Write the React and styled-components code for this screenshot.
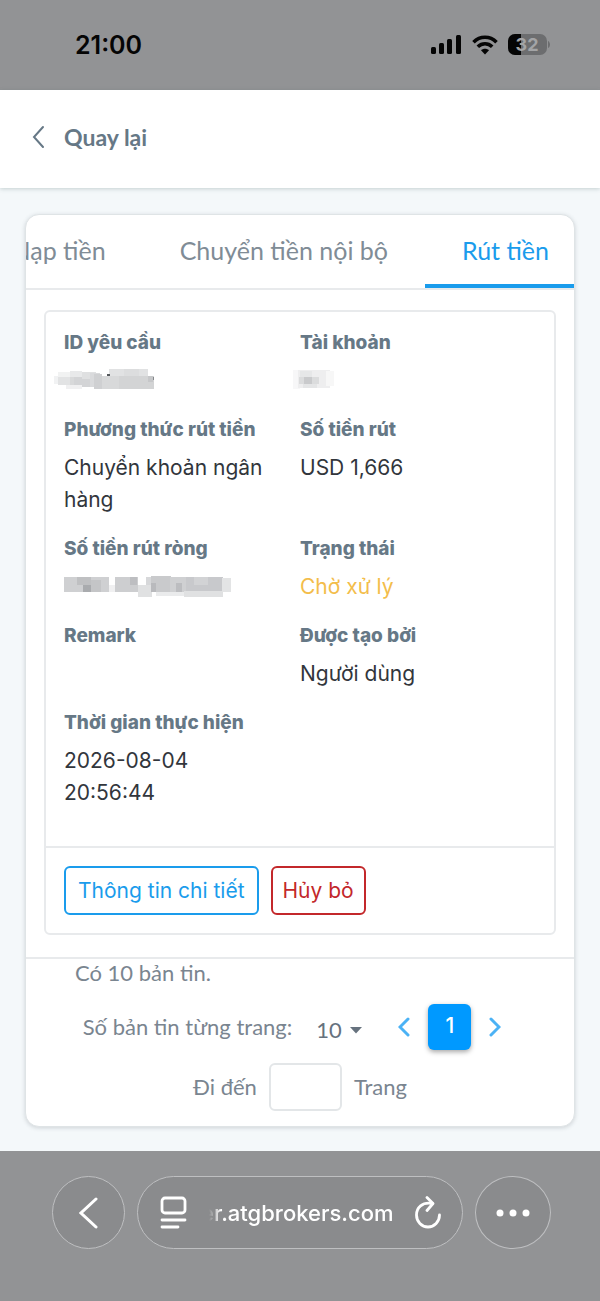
import { useState } from 'react';
import styled, { createGlobalStyle } from 'styled-components';

const GlobalStyle = createGlobalStyle`
  *, *::before, *::after {
    box-sizing: border-box;
  }

  body {
    margin: 0;
    background: #f4f8fa;
    color: #32363c;
    font-family: Inter, "Noto Sans", sans-serif;
    font-size: 21px;
    line-height: 32px;
  }

  button, input, select {
    font: inherit;
    color: inherit;
  }
`;

const round = "Lato, 'Noto Sans', sans-serif";

// ---- status bar ----
const StatusBar = styled.header`
  display: flex;
  align-items: center;
  justify-content: space-between;
  height: 90px;
  padding: 0 50px 0 75px;
  background: #929395;
  color: #050505;
`;

const Clock = styled.time`
  font-size: 25px;
  font-weight: 600;
`;

const StatusIcons = styled.div`
  display: flex;
  align-items: center;
  gap: 10px;

  svg {
    display: block;
  }
`;

// ---- back bar ----
const BackBar = styled.nav`
  display: flex;
  align-items: center;
  height: 98px;
  padding: 0 32px 4px;
  background: #fff;
  box-shadow: 0 1px 4px rgba(60, 90, 90, 0.25);
`;

const BackButton = styled.button`
  display: flex;
  align-items: center;
  gap: 19px;
  padding: 0;
  border: none;
  background: none;
  color: #667886;
  font-family: ${round};
  font-size: 23px;
  font-weight: 700;
  cursor: pointer;
`;

// ---- card ----
const Main = styled.main`
  padding: 26px 25px 24px;
`;

const Card = styled.section`
  overflow: hidden;
  border: 1px solid #dfe4e6;
  border-radius: 14px;
  background: #fff;
  box-shadow: 0 1px 4px rgba(60, 70, 80, 0.2);
`;

const Tabs = styled.div`
  display: flex;
  justify-content: flex-end;
  height: 75px;
  overflow: hidden;
  border-bottom: 2px solid #e8eaec;
`;

const Tab = styled.button`
  flex: none;
  height: 73px;
  padding: 0 37px;
  border: none;
  border-bottom: 4px solid ${({ $active }) => ($active ? '#1a9cec' : 'transparent')};
  background: none;
  color: ${({ $active }) => ($active ? '#1a9cec' : '#808c96')};
  font-family: ${round};
  font-size: 25px;
  cursor: pointer;

  &:last-child {
    margin-right: -12px;
  }
`;

const Panel = styled.article`
  margin: 20px 18px 22px;
  border: 2px solid #e8eaec;
  border-radius: 6px;
`;

const Fields = styled.dl`
  display: grid;
  grid-template-columns: 1fr 1fr;
  row-gap: 17px;
  margin: 0;
  padding: 15px 18px 37px;
`;

const Field = styled.div`
  min-height: 70px;
  padding-right: 32px;
`;

const Label = styled.dt`
  margin-bottom: 6px;
  color: #667886;
  font-size: 19px;
  font-weight: 800;
  white-space: nowrap;
`;

const Value = styled.dd`
  margin: 0;
  color: ${({ $pending }) => ($pending ? '#f3bd4b' : 'inherit')};

  svg {
    display: block;
    overflow: visible;
  }
`;

const PanelFooter = styled.footer`
  display: flex;
  gap: 12px;
  padding: 18px;
  border-top: 2px solid #e8eaec;
`;

const OutlineButton = styled.button`
  height: 49px;
  padding: ${({ $danger }) => ($danger ? '1px 10px 0' : '1px 12px 0')};
  border: 2px solid currentColor;
  border-radius: 6px;
  background: #fff;
  color: ${({ $danger }) => ($danger ? '#c3282b' : '#1a9cec')};
  white-space: nowrap;
  cursor: pointer;
`;

// ---- pager ----
const Pager = styled.footer`
  border-top: 2px solid #e8eaec;
  padding-bottom: 9px;
  color: #7a8590;
  font-family: ${round};
  font-size: 22px;
`;

const Total = styled.p`
  margin: 0 0 10px;
  padding: 0 49px;
  line-height: 28px;
`;

const PagerRow = styled.div`
  display: flex;
  align-items: center;
  justify-content: center;
  gap: 12px;
  height: 60px;
`;

const SizeRow = styled(PagerRow)`
  gap: 24px;
  padding-right: 16px;
  white-space: nowrap;
`;

const SizePicker = styled.span`
  display: flex;
  align-items: center;
  gap: 8px;
  padding-top: 6px;
  color: #66727e;
`;

const SizeSelect = styled.select`
  appearance: none;
  padding: 0;
  border: none;
  background: none;
`;

const Pages = styled.div`
  display: flex;
  align-items: center;
  gap: 18px;
  margin-left: 12px;
`;

const ArrowButton = styled.button`
  display: flex;
  padding: 0;
  border: none;
  background: none;
  color: #4bb2f5;
  cursor: pointer;
`;

const PageButton = styled.button`
  width: 43px;
  height: 46px;
  padding: 0 0 2px;
  border: none;
  border-radius: 6px;
  background: #0099ff;
  box-shadow: 0 2px 5px rgba(0, 0, 0, 0.35);
  color: #fff;
  font-family: Inter, sans-serif;
  font-size: 21px;
  font-weight: 500;
  cursor: pointer;
`;

const PageInput = styled.input`
  width: 73px;
  height: 48px;
  margin: 0;
  padding: 0 8px;
  border: 2px solid #e3e6e8;
  border-radius: 6px;
  background: #fff;
`;

// ---- browser toolbar ----
const Toolbar = styled.footer`
  display: flex;
  align-items: flex-start;
  gap: 12px;
  height: 150px;
  padding: 25px 49px 0 52px;
  background: #929395;
`;

const RoundButton = styled.button`
  display: flex;
  flex: none;
  align-items: center;
  justify-content: center;
  width: ${({ $wide }) => ($wide ? 76 : 73)}px;
  height: 73px;
  padding: 0;
  border: 1px solid #bebfc1;
  border-radius: 50%;
  background: #8a8b8d;
  color: #fff;
`;

const AddressBar = styled.div`
  display: flex;
  flex: 1;
  align-items: center;
  justify-content: space-between;
  min-width: 0;
  height: 73px;
  padding: 0 20px;
  border: 1px solid #bebfc1;
  border-radius: 37px;
  background: #8a8b8d;
  color: #fff;
`;

const Address = styled.span`
  display: flex;
  justify-content: flex-end;
  width: 185px;
  overflow: hidden;
  font-size: 22px;
  font-weight: 500;
  white-space: nowrap;
  mask-image: linear-gradient(to right, transparent, #000 12px);
`;

const IconButton = styled.button`
  display: flex;
  padding: 0;
  border: none;
  background: none;
`;

const SignalIcon = () => (
  <svg width="31" height="20" viewBox="0 0 31 20" fill="currentColor">
    <rect x="0" y="12" width="5" height="7" rx="1.5" />
    <rect x="8" y="8" width="5" height="11" rx="1.5" />
    <rect x="16" y="4" width="5" height="15" rx="1.5" />
    <rect x="25" y="0" width="5" height="19" rx="1.5" />
  </svg>
);

const WifiIcon = () => (
  <svg width="26" height="20" viewBox="0 0 26 20" fill="none" stroke="currentColor" strokeWidth="3.6">
    <path d="M1.5 7.2C8 .6 18 .6 24.5 7.2" />
    <path d="M5.8 11.8c4.2-4 10.2-4 14.4 0" />
    <path d="M13 19.4l-4-4.1c2.3-2 5.7-2 8 0z" fill="currentColor" stroke="none" />
  </svg>
);

const BatteryIcon = () => (
  <svg width="42" height="22" viewBox="0 0 42 22">
    <defs>
      <clipPath id="battery">
        <rect width="39" height="21" rx="7" />
      </clipPath>
    </defs>
    <g clipPath="url(#battery)">
      <rect width="39" height="21" fill="#6c6d6f" />
      <rect width="13" height="21" fill="#050505" />
    </g>
    <path d="M40 7c2.6 1 2.6 6 0 7z" fill="#6c6d6f" />
    <text x="19" y="17" textAnchor="middle" fontFamily="Inter, sans-serif" fontSize="18" fontWeight="700" fill="#a3a4a6">
      32
    </text>
  </svg>
);

const Chevron = ({ width, height, stroke, flip }) => (
  <svg width={width} height={height} viewBox={`0 0 ${width} ${height}`} fill="none" stroke="currentColor" strokeWidth={stroke} strokeLinecap="round">
    <path
      d={
        flip
          ? `M2 2L${width - 2} ${height / 2}L2 ${height - 2}`
          : `M${width - 2} 2L2 ${height / 2}L${width - 2} ${height - 2}`
      }
    />
  </svg>
);

const CaretIcon = () => (
  <svg width="12" height="7" viewBox="0 0 12 7" fill="currentColor">
    <path d="M0 0h12L6 6.5z" />
  </svg>
);

const ReaderIcon = () => (
  <svg width="30" height="34" viewBox="0 0 30 34" fill="none" stroke="currentColor" strokeWidth="2.8" strokeLinecap="round">
    <rect x="4" y="2" width="23" height="15" rx="3" />
    <path d="M4 24h23M4 31h16" />
  </svg>
);

const ReloadIcon = () => (
  <svg width="28" height="34" viewBox="0 0 28 34" fill="none" stroke="currentColor" strokeWidth="2.8" strokeLinecap="round" strokeLinejoin="round">
    <path d="M18.5 7.5C8 5.5 2.5 12 2.5 19a11.5 12 0 0 0 23 0" />
    <path d="M13 1.5l6 6-6 7" />
  </svg>
);

const DotsIcon = () => (
  <svg width="34" height="8" viewBox="0 0 34 8" fill="currentColor">
    <circle cx="4" cy="4" r="3.5" />
    <circle cx="17" cy="4" r="3.5" />
    <circle cx="30" cy="4" r="3.5" />
  </svg>
);

// [x, y, width, height, colour] of each block that covers a hidden value
const masks = {
  id: [
    [-10, 10, 12, 8, '#f1f2f3'], [-6, 6, 14, 5, '#f1f2f2'], [-6, 11, 14, 8, '#e2e3e4'],
    [6, 5, 12, 7, '#e8e9ea'], [6, 11, 6, 8, '#d8d9da'], [10, 11, 18, 10, '#d3d4d6'],
    [18, 6, 14, 7, '#dfe0e1'], [26, 7, 10, 14, '#d9dadc'], [30, 8, 8, 15, '#cfd0d2'],
    [38, 10, 20, 13, '#d8d9da'], [45, 3, 39, 7, '#e1e2e3'], [60, 3, 15, 7, '#dcddde'],
    [55, 10, 35, 13, '#d3d4d5'], [43, 8, 3, 2, '#55585c'], [84, 10, 5, 6, '#c6c7c9'],
    [89, 11, 1, 3, '#85888b'], [2, 19, 16, 4, '#f0f0f1'],
  ],
  account: [
    [-7, 4, 7, 19, '#f7f7f8'], [-2, 4, 32, 18, '#eeeeef'], [0, 5, 12, 6, '#e6e7e8'],
    [-1, 11, 20, 7, '#dbdcdd'], [4, 11, 8, 8, '#c9cacc'], [3, 18, 14, 4, '#e4e5e6'],
    [26, 5, 8, 15, '#f7f7f7'],
  ],
  net: [
    [0, 5, 45, 15, '#cfd0d2'], [13, 5, 14, 8, '#bfc0c2'], [19, 13, 8, 7, '#a9abae'],
    [27, 8, 10, 12, '#c4c5c7'], [45, 13, 6, 7, '#f0f0f1'], [51, 5, 23, 15, '#cdced0'],
    [66, 5, 7, 8, '#bdbec1'], [74, 13, 14, 12, '#e0e1e2'], [82, 5, 8, 8, '#d7d8da'],
    [87, 4, 20, 16, '#c9cacc'], [87, 11, 5, 9, '#b9babd'], [92, 20, 28, 4, '#eaebec'],
    [106, 5, 18, 15, '#cfd0d2'], [112, 11, 6, 9, '#bcbdc0'], [122, 5, 37, 15, '#c8c9cc'],
    [130, 5, 14, 8, '#d2d3d5'], [120, 19, 39, 6, '#e0e1e2'], [158, 6, 9, 14, '#e3e4e5'],
  ],
};

const Mask = ({ name }) => (
  <svg width="90" height="32" viewBox="0 -1 90 32" role="img" aria-label="***">
    {masks[name].map(([x, y, w, h, fill]) => (
      <rect key={`${x}-${y}-${w}`} x={x} y={y} width={w} height={h} fill={fill} />
    ))}
  </svg>
);

const tabs = ['Nạp tiền', 'Chuyển tiền nội bộ', 'Rút tiền'];

const fields = [
  { label: 'ID yêu cầu', value: <Mask name="id" /> },
  { label: 'Tài khoản', value: <Mask name="account" /> },
  { label: 'Phương thức rút tiền', value: 'Chuyển khoản ngân hàng' },
  { label: 'Số tiền rút', value: 'USD 1,666' },
  { label: 'Số tiền rút ròng', value: <Mask name="net" /> },
  { label: 'Trạng thái', value: 'Chờ xử lý', pending: true },
  { label: 'Remark', value: '' },
  { label: 'Được tạo bởi', value: 'Người dùng' },
  { label: 'Thời gian thực hiện', value: '2026-08-04 20:56:44' },
];

const App = () => {
  const [activeTab, setActiveTab] = useState('Rút tiền');
  const [page, setPage] = useState('');

  return (
    <>
      <GlobalStyle />
      <StatusBar>
        <Clock>21:00</Clock>
        <StatusIcons>
          <SignalIcon />
          <WifiIcon />
          <BatteryIcon />
        </StatusIcons>
      </StatusBar>

      <BackBar>
        <BackButton>
          <Chevron width={13} height={24} stroke={2} />
          Quay lại
        </BackButton>
      </BackBar>

      <Main>
        <Card>
          <Tabs role="tablist">
            {tabs.map((tab) => (
              <Tab
                key={tab}
                role="tab"
                aria-selected={tab === activeTab}
                $active={tab === activeTab}
                onClick={() => setActiveTab(tab)}
              >
                {tab}
              </Tab>
            ))}
          </Tabs>

          <Panel>
            <Fields>
              {fields.map(({ label, value, pending }) => (
                <Field key={label}>
                  <Label>{label}</Label>
                  <Value $pending={pending}>{value}</Value>
                </Field>
              ))}
            </Fields>
            <PanelFooter>
              <OutlineButton>Thông tin chi tiết</OutlineButton>
              <OutlineButton $danger>Hủy bỏ</OutlineButton>
            </PanelFooter>
          </Panel>

          <Pager>
            <Total>Có 10 bản tin.</Total>
            <SizeRow>
              <label htmlFor="size">Số bản tin từng trang:</label>
              <SizePicker>
                <SizeSelect id="size" defaultValue="10">
                  <option>10</option>
                </SizeSelect>
                <CaretIcon />
              </SizePicker>
              <Pages>
                <ArrowButton aria-label="Trang trước">
                  <Chevron width={12} height={20} stroke={3} />
                </ArrowButton>
                <PageButton>1</PageButton>
                <ArrowButton aria-label="Trang sau">
                  <Chevron width={12} height={20} stroke={3} flip />
                </ArrowButton>
              </Pages>
            </SizeRow>
            <PagerRow>
              <label htmlFor="page">Đi đến</label>
              <PageInput id="page" value={page} onChange={(e) => setPage(e.target.value)} />
              <span>Trang</span>
            </PagerRow>
          </Pager>
        </Card>
      </Main>

      <Toolbar>
        <RoundButton aria-label="Back">
          <Chevron width={19} height={32} stroke={3} />
        </RoundButton>
        <AddressBar>
          <IconButton aria-label="Page menu">
            <ReaderIcon />
          </IconButton>
          <Address>er.atgbrokers.com</Address>
          <IconButton aria-label="Reload">
            <ReloadIcon />
          </IconButton>
        </AddressBar>
        <RoundButton $wide aria-label="More">
          <DotsIcon />
        </RoundButton>
      </Toolbar>
    </>
  );
};

export default App;
